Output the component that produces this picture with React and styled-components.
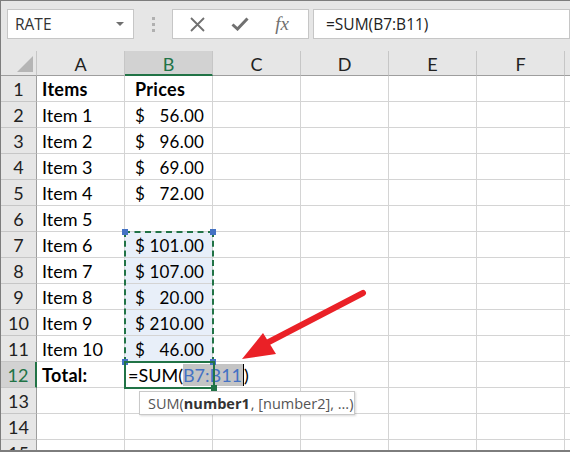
import React from "react";
import styled, { createGlobalStyle } from "styled-components";

const GlobalStyle = createGlobalStyle`
  body {
    margin: 0;
    font-family: "Lato", "Noto Sans", sans-serif;
  }
`;

const COLS = ["A", "B", "C", "D", "E", "F", ""];

const rows = [
  { a: "Items", b: "Prices", bold: true },
  { a: "Item 1", price: "56.00" },
  { a: "Item 2", price: "96.00" },
  { a: "Item 3", price: "69.00" },
  { a: "Item 4", price: "72.00" },
  { a: "Item 5" },
  { a: "Item 6", price: "101.00", sel: true },
  { a: "Item 7", price: "107.00", sel: true },
  { a: "Item 8", price: "20.00", sel: true },
  { a: "Item 9", price: "210.00", sel: true },
  { a: "Item 10", price: "46.00", sel: true },
  { a: "Total:", bold: true, formula: true },
  {},
  {},
  {},
];

const Frame = styled.div`
  width: 570px;
  height: 452px;
  box-sizing: border-box;
  overflow: hidden;
  background: #e6e6e6;
  border-top: 1px solid #7d7d7d;
  border-left: 1px solid #7d7d7d;
`;

const TopBar = styled.div`
  height: 50px;
  box-sizing: border-box;
  padding: 8px 0 0 6px;
  display: flex;
  align-items: flex-start;
  font-family: "Open Sans", "Noto Sans", sans-serif;
`;

const Box = styled.div`
  height: 30px;
  box-sizing: border-box;
  background: #fff;
  border: 1px solid #c6c6c6;
  display: flex;
  align-items: center;
`;

const NameBox = styled(Box)`
  width: 127px;
  padding: 0 9px 0 7px;
  justify-content: space-between;
  font-size: 15.5px;
  color: #333;
`;

const DropArrow = styled.span`
  width: 0;
  height: 0;
  border-left: 4px solid transparent;
  border-right: 4px solid transparent;
  border-top: 4px solid #6f6f6f;
`;

const Grip = styled.div`
  width: 38px;
  display: flex;
  flex-direction: column;
  align-items: center;
  gap: 3px;
  padding-top: 8px;
  span {
    width: 3px;
    height: 3px;
    background: #b0b0b0;
  }
`;

const FxButtons = styled(Box)`
  width: 137px;
  justify-content: space-around;
  padding: 0 6px 0 4px;
  color: #6f6f6f;
`;

const FxMark = styled.span`
  font-family: "Liberation Serif", serif;
  font-style: italic;
  font-size: 19px;
  color: #707070;
`;

const FormulaBox = styled(Box)`
  flex: 1;
  margin-left: 4px;
  padding-left: 12px;
  font-size: 15.5px;
  color: #222;
`;

const Sheet = styled.div`
  position: relative;
  height: 399px;
  overflow: hidden;
  background: #fff;
  border-bottom: 2px solid #7d7d7d;
  display: grid;
  grid-template-columns: 36px repeat(7, 88px);
  grid-auto-rows: 26px;
  grid-template-rows: 25px;
`;

const Corner = styled.div`
  background: #e6e6e6;
  border-right: 1px solid #c6c6c6;
  border-bottom: 1px solid #9e9e9e;
  display: flex;
  align-items: flex-end;
  justify-content: flex-end;
  padding: 0 3px 3px 0;
`;

const ColHead = styled.div`
  box-sizing: border-box;
  background: ${(p) => (p.$active ? "#d2d2d2" : "#e6e6e6")};
  color: ${(p) => (p.$active ? "#217346" : "#222")};
  border-right: 1px solid #c6c6c6;
  border-bottom: ${(p) => (p.$active ? "2px solid #217346" : "1px solid #9e9e9e")};
  display: flex;
  align-items: center;
  justify-content: center;
  font-size: 18px;
  padding-top: 2px;
`;

const RowHead = styled.div`
  box-sizing: border-box;
  background: ${(p) => (p.$active ? "#d2d2d2" : "#e6e6e6")};
  color: ${(p) => (p.$active ? "#217346" : "#222")};
  border-right: ${(p) => (p.$active ? "2px solid #217346" : "1px solid #9e9e9e")};
  border-bottom: 1px solid #c6c6c6;
  display: flex;
  align-items: center;
  justify-content: center;
  font-size: 18px;
  padding-top: 1px;
`;

const Cell = styled.div`
  box-sizing: border-box;
  background: ${(p) => (p.$sel ? "#e8eff9" : "transparent")};
  border-right: 1px solid #d4d4d4;
  border-bottom: 1px solid #d4d4d4;
  display: flex;
  align-items: center;
  padding: 1px 0 0 ${(p) => p.$pad || 5}px;
  font-size: 18px;
  font-weight: ${(p) => (p.$bold ? 700 : 400)};
  letter-spacing: ${(p) => (p.$bold ? "0.3px" : "0")};
  color: #000;
  white-space: nowrap;
  overflow: visible;
  position: relative;
  z-index: ${(p) => (p.$front ? 2 : 0)};
`;

const Money = styled(Cell)`
  justify-content: space-between;
  padding-right: 8px;
  font-size: 17px;
  letter-spacing: 0.2px;
`;

const Ref = styled.span`
  background: #c4c4c4;
  color: #4472c4;
  border-right: 1px solid #000;
  padding-right: 1px;
`;

const RangeBox = styled.div`
  position: absolute;
  left: 123px;
  top: 180px;
  width: 90px;
  height: 132px;
  box-sizing: border-box;
  border: 2px dashed #217346;
  pointer-events: none;
  z-index: 3;
`;

const Handle = styled.span`
  position: absolute;
  width: 6px;
  height: 6px;
  background: ${(p) => p.$color || "#4472c4"};
  ${(p) => (p.$top ? "top: -4px;" : "bottom: -4px;")}
  ${(p) => (p.$left ? "left: -4px;" : "right: -4px;")}
`;

const ActiveBox = styled.div`
  position: absolute;
  left: 123px;
  top: 310px;
  width: 91px;
  height: 28px;
  box-sizing: border-box;
  border: 2px solid #217346;
  pointer-events: none;
  z-index: 3;
`;

const Tip = styled.div`
  position: absolute;
  left: 138px;
  top: 340px;
  width: 216px;
  height: 24px;
  box-sizing: border-box;
  background: #fff;
  border: 1px solid #c9c9c9;
  box-shadow: 1px 1px 2px rgba(0, 0, 0, 0.15);
  padding-left: 8px;
  display: flex;
  align-items: center;
  font-family: "Open Sans", "Noto Sans", sans-serif;
  font-size: 14.5px;
  color: #555;
  z-index: 4;
  b {
    color: #333;
    margin-right: 1px;
  }
`;

const ArrowLayer = styled.svg`
  position: absolute;
  left: 0;
  top: 0;
  width: 569px;
  height: 399px;
  pointer-events: none;
  z-index: 5;
`;

function App() {
  return (
    <>
      <GlobalStyle />
      <Frame>
        <TopBar>
          <NameBox>
            RATE
            <DropArrow />
          </NameBox>
          <Grip>
            <span />
            <span />
            <span />
          </Grip>
          <FxButtons>
            <svg width="15" height="15" viewBox="0 0 15 15">
              <path d="M1 1 L14 14 M14 1 L1 14" stroke="#707070" strokeWidth="1.8" />
            </svg>
            <svg width="18" height="14" viewBox="0 0 18 14">
              <path d="M1.5 7.5 L6.5 12 L16.5 1.5" stroke="#707070" strokeWidth="3" fill="none" />
            </svg>
            <FxMark>fx</FxMark>
          </FxButtons>
          <FormulaBox>=SUM(B7:B11)</FormulaBox>
        </TopBar>

        <Sheet>
          <Corner>
            <svg width="16" height="16" viewBox="0 0 16 16">
              <polygon points="16,0 16,16 0,16" fill="#b5b5b5" />
            </svg>
          </Corner>
          {COLS.map((c, i) => (
            <ColHead key={i} $active={c === "B"}>
              {c}
            </ColHead>
          ))}

          {rows.map((r, i) => (
            <React.Fragment key={i}>
              <RowHead $active={i === 11}>{i + 1}</RowHead>
              <Cell $bold={r.bold}>{r.a}</Cell>
              {r.price ? (
                <Money $pad={10} $sel={r.sel}>
                  <span>$</span>
                  <span>{r.price}</span>
                </Money>
              ) : r.formula ? (
                <Cell $pad={3} $front>
                  =SUM(<Ref>B7:B11</Ref>)
                </Cell>
              ) : (
                <Cell $pad={10} $bold={r.bold}>
                  {r.b}
                </Cell>
              )}
              {COLS.slice(2).map((c, j) => (
                <Cell key={j} />
              ))}
            </React.Fragment>
          ))}

          <RangeBox>
            <Handle $top $left />
            <Handle $top />
            <Handle $left />
            <Handle />
          </RangeBox>
          <ActiveBox>
            <Handle $color="#217346" />
          </ActiveBox>

          <Tip>
            SUM(<b>number1</b>, [number2], ...)
          </Tip>

          <ArrowLayer viewBox="0 0 569 399">
            <line x1="362" y1="242" x2="262" y2="294" stroke="#ea2127" strokeWidth="6" strokeLinecap="round" />
            <polygon points="241,308 262,282 275,303" fill="#ea2127" />
          </ArrowLayer>
        </Sheet>
      </Frame>
    </>
  );
}

export default App;
